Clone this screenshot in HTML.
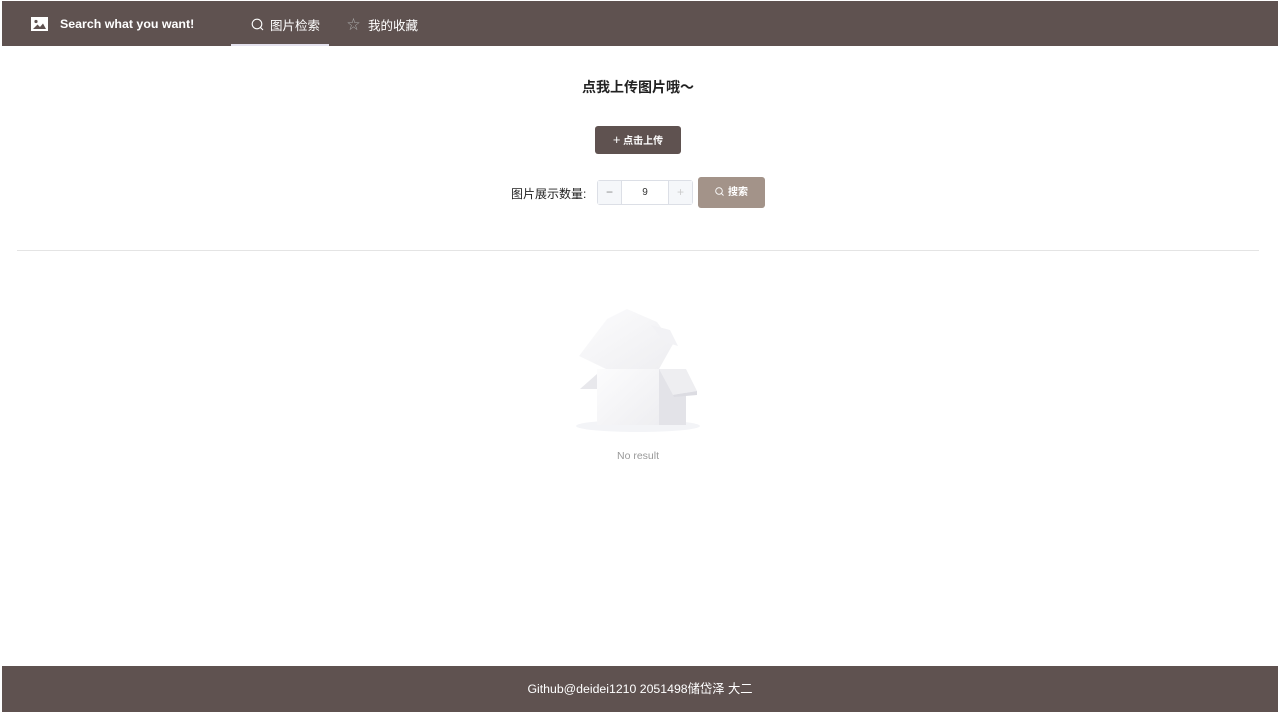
<!DOCTYPE html>
<html><head><meta charset="utf-8"><style>
*{margin:0;padding:0;box-sizing:border-box}
body{width:1280px;height:712px;background:#fff;font-family:"Liberation Sans","Noto Sans CJK SC",sans-serif;position:relative;overflow:hidden}
.hdr{position:absolute;left:2px;top:1px;width:1276px;height:45px;background:#5f5250;color:#fff}
.ftr{position:absolute;left:2px;top:666px;width:1276px;height:46px;background:#5f5250;color:#fff;font-size:12.3px;text-align:center;line-height:46px}
.abs{position:absolute}
</style></head><body>
<div class="hdr">
 <svg class="abs" style="left:29px;top:16px" width="17" height="14" viewBox="0 0 17 14"><rect width="17" height="14" fill="#fff"/><circle cx="5" cy="4.5" r="1.6" fill="#5f5250"/><path d="M2 12 L6.5 7.5 L9 10 L12 6.5 L15 12Z" fill="#5f5250"/></svg>
 <div class="abs" style="left:58px;top:16px;font-size:12.4px;font-weight:bold">Search what you want!</div>
 <svg class="abs" style="left:249px;top:17px" width="13" height="13" viewBox="0 0 13 13"><circle cx="6" cy="6" r="4.8" fill="none" stroke="#fff" stroke-width="1.1"/><path d="M9.5 9.5L12 12" stroke="#fff" stroke-width="1.1"/></svg>
 <div class="abs" style="left:268px;top:14px;font-size:12.5px">图片检索</div>
 <div class="abs" style="left:229px;top:43px;width:98px;height:2px;background:#e4e2ee"></div>
 <div class="abs" style="left:345px;top:13px;font-size:13px;color:#aaa">☆</div>
 <div class="abs" style="left:366px;top:14px;font-size:12.5px">我的收藏</div>
</div>
<div class="abs" style="left:0;width:1276px;top:77px;text-align:center;font-size:14px;font-weight:bold;color:#222">点我上传图片哦～</div>
<div class="abs" style="left:595px;top:126px;width:86px;height:28px;background:#5f5250;border-radius:3px;color:#fff;font-size:10px;font-weight:bold;text-align:center;line-height:28px"><span style="font-weight:normal;font-size:13px">+</span> 点击上传</div>
<div class="abs" style="left:511px;top:185px;font-size:12px;color:#222">图片展示数量:</div>
<div class="abs" style="left:597px;top:180px;width:96px;height:25px;border:1px solid #dcdfe6;border-radius:3px;background:#fff">
 <div class="abs" style="left:0;top:0;width:24px;height:23px;background:#f5f7fa;border-right:1px solid #dcdfe6;text-align:center;line-height:22px;color:#888;font-size:12px">−</div>
 <div class="abs" style="left:24px;top:0;width:46px;height:23px;text-align:center;line-height:23px;font-size:10px;color:#333">9</div>
 <div class="abs" style="right:0;top:0;width:24px;height:23px;background:#f5f7fa;border-left:1px solid #dcdfe6;text-align:center;line-height:22px;color:#ccc;font-size:12px">+</div>
</div>
<div class="abs" style="left:698px;top:177px;width:67px;height:31px;background:#a39389;border-radius:3px;color:#fff;font-size:10px;font-weight:bold;line-height:32px;text-align:center">
 <svg style="vertical-align:-1px;margin-right:4px" width="9" height="9" viewBox="0 0 9 9"><circle cx="4" cy="4" r="3.3" fill="none" stroke="#fff" stroke-width="0.9"/><path d="M6.5 6.5L8.5 8.5" stroke="#fff" stroke-width="0.9"/></svg>搜索</div>
<div class="abs" style="left:17px;top:250px;width:1242px;height:1px;background:#e4e4e4"></div>
<svg class="abs" style="left:570px;top:305px" width="140" height="130" viewBox="570 305 140 130">
 <defs><linearGradient id="g" x1="0" y1="0" x2="1" y2="1"><stop offset="0" stop-color="#fcfcfd"/><stop offset="1" stop-color="#eeeef1"/></linearGradient></defs>
 <ellipse cx="638" cy="426" rx="62" ry="6" fill="#f3f4f7"/>
 <path d="M597 374 L580 389 L597 389Z" fill="#e8e8ec"/>
 <path d="M597 369 L659 369 L659 425 L597 425Z" fill="url(#g)"/>
 <path d="M659 369 L686 369 L686 425 L659 425Z" fill="#e3e3e8"/>
 <path d="M659 369 L686 369 L697 391 L673 395Z" fill="#eeeef1"/>
 <path d="M673 395 L697 391 L697 395 L674 397Z" fill="#dcdce2"/>
 <path d="M607 319 L627 309 L657 322 L673 344 L659 369 L606 369 L579 356Z" fill="url(#g)"/>
 <path d="M651 325 L670 330 L678 346 L665 342Z" fill="#f2f2f5"/>
</svg>
<div class="abs" style="left:0;width:1276px;top:450px;text-align:center;font-size:10.5px;color:#999">No result</div>
<div class="ftr">Github@deidei1210 2051498储岱泽 大二</div>
</body></html>
